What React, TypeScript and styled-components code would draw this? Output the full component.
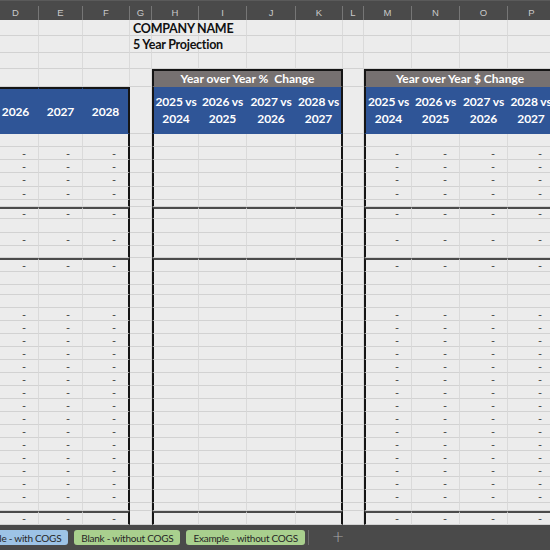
import React from 'react';
import styled, { createGlobalStyle } from 'styled-components';

const GlobalStyle = createGlobalStyle`
  html, body { margin: 0; padding: 0; background: #ececec; }
  body { font-family: Lato, "Open Sans", sans-serif; }
`;

type Group = 'left' | 'pct' | 'usd' | 'gap';
interface Col { key: string; w: number; group: Group; first?: boolean; last?: boolean; }
type Kind = 'title1' | 'title2' | 'blank' | 'gray' | 'blue' | 'body';
interface Row { h: number; kind: Kind; dash?: boolean; thick?: boolean; }

const COLS: Col[] = [
  { key: 'D', w: 46, group: 'left' },
  { key: 'E', w: 44, group: 'left' },
  { key: 'F', w: 47, group: 'left', last: true },
  { key: 'G', w: 22, group: 'gap' },
  { key: 'H', w: 47, group: 'pct', first: true },
  { key: 'I', w: 48, group: 'pct' },
  { key: 'J', w: 49, group: 'pct' },
  { key: 'K', w: 47, group: 'pct', last: true },
  { key: 'L', w: 21, group: 'gap' },
  { key: 'M', w: 48, group: 'usd', first: true },
  { key: 'N', w: 48, group: 'usd' },
  { key: 'O', w: 48, group: 'usd' },
  { key: 'P', w: 48, group: 'usd', last: true },
];

const body = (h: number, dash = false, thick = false): Row => ({ h, kind: 'body', dash, thick });

const ROWS: Row[] = [
  { h: 16, kind: 'title1' },
  { h: 17, kind: 'title2' },
  { h: 16, kind: 'blank' },
  { h: 18, kind: 'gray' },
  { h: 47, kind: 'blue' },
  body(13),
  body(13, true),
  body(13, true),
  body(14, true),
  body(13, true),
  body(7),
  body(12, true, true),
  body(14),
  body(13, true),
  body(12),
  body(14, true, true),
  body(13),
  body(10),
  body(13),
  ...Array.from({ length: 15 }, () => body(13, true)),
  body(8),
  body(14, true, true),
];

const GRAY_ROW = 3;
const BLUE_ROW = 4;

const BLUE = '#2f5597';
const GRAY = '#767171';
const GRID_H = '1px solid #d2d2d2';
const GRID_V = '1px solid #dadada';
const BLACK = '2px solid #151515';
const DARK = '2px solid #4b4b4b';

const LEFT_HEADS = ['2026', '2027', '2028'];
const CMP_HEADS = [
  ['2025 vs', '2024'],
  ['2026 vs', '2025'],
  ['2027 vs', '2026'],
  ['2028 vs', '2027'],
];

const template = COLS.map((c) => `${c.w}px`).join(' ');

const Frame = styled.div`
  width: 550px;
  height: 550px;
  overflow: hidden;
  display: flex;
  flex-direction: column;
  background: #ececec;
`;

const Track = styled.div`
  margin-left: -7px;
  width: 563px;
  display: flex;
  flex-direction: column;
`;

const ColumnBar = styled.div`
  display: grid;
  grid-template-columns: ${template};
  height: 20px;
  box-sizing: border-box;
  padding-top: 5px;
  background: #4a4a4a;
  border-top: 1px solid #5a5a5a;
`;

const ColLetter = styled.div`
  display: flex;
  align-items: center;
  justify-content: center;
  border-right: 1px solid #767676;
  color: #c9c9c9;
  font-family: "Liberation Sans", Arial, sans-serif;
  font-size: 9.5px;
  line-height: 1;
`;

const Sheet = styled.div<{ $rows: string }>`
  display: grid;
  grid-template-columns: ${template};
  grid-template-rows: ${(p) => p.$rows};
`;

const Cell = styled.div<{ $fill: string; $right: string; $bottom: string; $left: string; $top: string; $span: number; $justify: string }>`
  box-sizing: border-box;
  min-width: 0;
  display: flex;
  align-items: center;
  justify-content: ${(p) => p.$justify};
  grid-column: span ${(p) => p.$span};
  background: ${(p) => p.$fill};
  border-right: ${(p) => p.$right};
  border-bottom: ${(p) => p.$bottom};
  border-left: ${(p) => p.$left};
  border-top: ${(p) => p.$top};
`;

const Title = styled.span`
  position: relative;
  z-index: 1;
  padding-left: 3px;
  padding-top: 1px;
  white-space: nowrap;
  color: #111;
  font-weight: 700;
  font-size: 12.5px;
  letter-spacing: -0.25px;
`;

const GroupTitle = styled.span`
  white-space: pre;
  color: #fff;
  font-weight: 700;
  font-size: 12px;
`;

const HeadText = styled.span`
  color: #fff;
  font-weight: 700;
  font-size: 12px;
  line-height: 17px;
  letter-spacing: -0.1px;
  text-align: center;
  white-space: nowrap;
`;

const Dash = styled.span`
  padding-right: 12px;
  color: #444;
  font-size: 11px;
  line-height: 1;
`;

const TabBar = styled.div`
  flex: 1;
  display: flex;
  align-items: center;
  background: #4a4a4a;
  overflow: hidden;
`;

const Tabs = styled.div`
  display: flex;
  align-items: center;
  gap: 6px;
  margin-left: -36px;
`;

const Tab = styled.div<{ $fill: string }>`
  height: 15px;
  padding: 0 7px;
  border-radius: 3px;
  display: flex;
  align-items: center;
  background: ${(p) => p.$fill};
  color: #262626;
  font-size: 10px;
  letter-spacing: -0.25px;
  white-space: nowrap;
`;

const TabDivider = styled.div`
  width: 1px;
  height: 15px;
  background: #6e6e6e;
  margin-left: -3px;
`;

const AddSheet = styled.div`
  margin-left: 23px;
  color: #a8a8a8;
  font-family: "DejaVu Sans", sans-serif;
  font-size: 15px;
  font-weight: 300;
  line-height: 1;
`;

function tableTop(col: Col): number {
  return col.group === 'left' ? BLUE_ROW : GRAY_ROW;
}

function renderCells() {
  const out: React.ReactNode[] = [];
  ROWS.forEach((row, r) => {
    let skip = 0;
    COLS.forEach((col, c) => {
      if (skip > 0) {
        skip -= 1;
        return;
      }
      const inTable = col.group !== 'gap';
      const inRange = inTable && r >= tableTop(col);
      let fill = '#ececec';
      let span = 1;
      let justify = 'flex-start';
      let content: React.ReactNode = null;
      let right = GRID_V;
      let bottom = GRID_H;
      let left = 'none';
      let top = 'none';

      if (r === GRAY_ROW && (col.group === 'pct' || col.group === 'usd')) {
        fill = GRAY;
        span = 4;
        skip = 3;
        justify = 'center';
        bottom = `1px solid ${GRAY}`;
        content = (
          <GroupTitle>{col.group === 'pct' ? 'Year over Year %  Change' : 'Year over Year $ Change'}</GroupTitle>
        );
      } else if (r === BLUE_ROW && inTable) {
        fill = BLUE;
        justify = 'center';
        bottom = `1px solid ${BLUE}`;
        right = `1px solid ${BLUE}`;
        if (col.group === 'left') {
          content = <HeadText>{LEFT_HEADS[c]}</HeadText>;
        } else {
          const idx = col.group === 'pct' ? c - 4 : c - 9;
          content = (
            <HeadText>
              {CMP_HEADS[idx][0]}
              <br />
              {CMP_HEADS[idx][1]}
            </HeadText>
          );
        }
      } else if (row.kind === 'title1' && col.key === 'G') {
        content = <Title>COMPANY NAME</Title>;
      } else if (row.kind === 'title2' && col.key === 'G') {
        content = <Title>5 Year Projection</Title>;
      } else if (row.dash && (col.group === 'left' || col.group === 'usd')) {
        justify = 'flex-end';
        content = <Dash>-</Dash>;
      }

      if (inRange && col.last && span === 1) right = BLACK;
      if (span === 4) right = BLACK;
      if (inRange && col.first) left = BLACK;
      if (inTable && r === tableTop(col)) top = BLACK;
      else if (inTable && row.thick) top = DARK;

      out.push(
        <Cell
          key={`${r}-${col.key}`}
          $fill={fill}
          $span={span}
          $justify={justify}
          $right={right}
          $bottom={bottom}
          $left={left}
          $top={top}
        >
          {content}
        </Cell>
      );
    });
  });
  return out;
}

export default function App() {
  const rows = ROWS.map((r) => `${r.h}px`).join(' ');
  return (
    <>
      <GlobalStyle />
      <Frame>
        <Track>
          <ColumnBar>
            {COLS.map((c) => (
              <ColLetter key={c.key}>{c.key}</ColLetter>
            ))}
          </ColumnBar>
          <Sheet $rows={rows}>{renderCells()}</Sheet>
        </Track>
        <TabBar>
          <Tabs>
            <Tab $fill="#9dc3e6">Example - with COGS</Tab>
            <Tab $fill="#a9d08e">Blank - without COGS</Tab>
            <Tab $fill="#a9d08e">Example - without COGS</Tab>
            <TabDivider />
          </Tabs>
          <AddSheet>+</AddSheet>
        </TabBar>
      </Frame>
    </>
  );
}
